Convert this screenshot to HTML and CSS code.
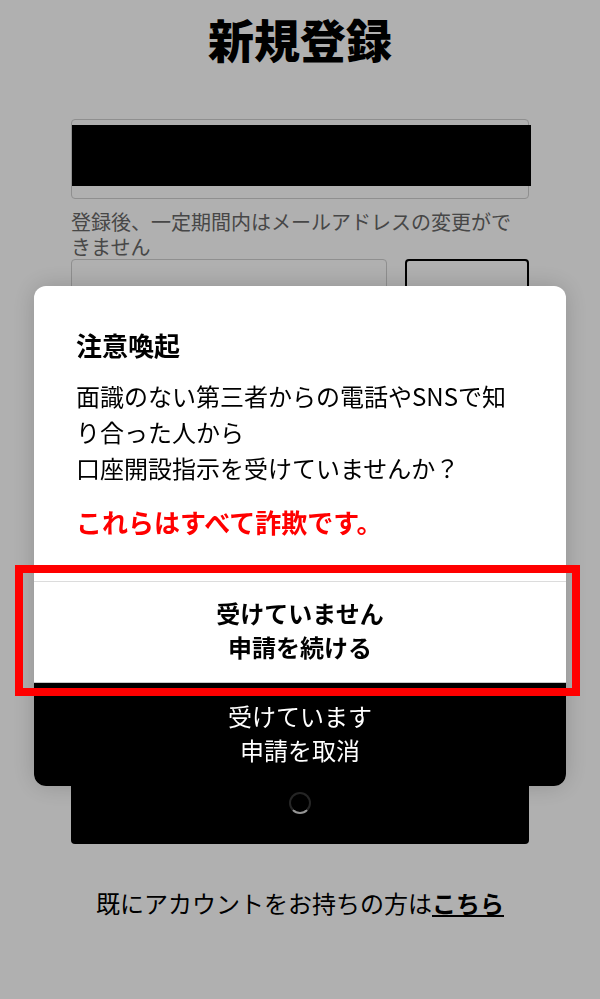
FILE: index.html
```html
<!DOCTYPE html>
<html lang="ja">
<head>
<meta charset="utf-8">
<title>新規登録</title>
<link rel="stylesheet" href="styles.css">
</head>
<body>
<main class="page">
  <h1 class="title">新規登録</h1>
  <div class="field">
    <div class="redact"></div>
  </div>
  <p class="help">登録後、一定期間内はメールアドレスの変更ができません</p>
  <div class="code-row">
    <div class="field small"></div>
    <div class="send-btn"></div>
  </div>
  <div class="submit">
    <span class="spinner"></span>
  </div>
  <p class="login">既にアカウントをお持ちの方は<a class="login-link" href="#">こちら</a></p>
</main>

<div class="overlay"></div>

<div class="modal">
  <div class="modal-body">
    <h2 class="modal-title">注意喚起</h2>
    <p class="modal-text">面識のない第三者からの電話やSNSで知り合った人から<br>口座開設指示を受けていませんか？</p>
    <p class="modal-warn">これらはすべて詐欺です。</p>
  </div>
  <button class="btn-continue">受けていません<br>申請を続ける</button>
  <button class="btn-cancel">受けています<br>申請を取消</button>
</div>

<div class="highlight"></div>
</body>
</html>
```

FILE: styles.css
```css
* {
  box-sizing: border-box;
}

html, body {
  margin: 0;
  padding: 0;
  background: #ffffff;
  font-family: "Noto Sans CJK JP", "Noto Sans", sans-serif;
  color: #000;
}

.page {
  width: 458px;
  margin: 0 auto;
  display: flex;
  flex-direction: column;
}

.title {
  margin: 11px 0 0;
  font-size: 46px;
  line-height: 1.2;
  font-weight: 900;
  text-align: center;
}

.field {
  margin-top: 53px;
  height: 80px;
  border: 1px solid #cfcfcf;
  border-radius: 4px;
  padding-top: 5px;
}

.redact {
  height: 61px;
  background: #000;
  margin-right: -3px;
}

.help {
  margin: 10px 0 0;
  font-size: 20px;
  line-height: 25px;
  color: #676767;
}

.code-row {
  display: flex;
  gap: 18px;
}

.field.small {
  margin-top: 0;
  flex: 1;
  height: 58px;
  padding: 0;
}

.send-btn {
  width: 124px;
  height: 58px;
  border: 2px solid #000;
  border-radius: 4px;
}

.submit {
  margin-top: 445px;
  height: 82px;
  background: #000;
  border-radius: 4px;
  display: flex;
  align-items: center;
  justify-content: center;
}

.spinner {
  width: 22px;
  height: 22px;
  border-radius: 50%;
  border: 2px solid rgba(255, 255, 255, 0.22);
  border-bottom-color: rgba(255, 255, 255, 0.85);
}

.login {
  margin: 41px 0 0;
  font-size: 24px;
  line-height: 36px;
  text-align: center;
}

.login-link {
  color: #000;
  font-weight: 700;
  text-decoration: underline;
}

.overlay {
  position: fixed;
  inset: 0;
  background: rgba(0, 0, 0, 0.31);
}

.modal {
  position: fixed;
  left: 34px;
  top: 286px;
  width: 532px;
  border-radius: 12px;
  background: #fff;
  overflow: hidden;
  box-shadow: 0 0 24px rgba(0, 0, 0, 0.18);
  display: flex;
  flex-direction: column;
}

.modal-body {
  padding: 39px 42px 40px;
}

.modal-title {
  margin: 0;
  font-size: 26px;
  line-height: 39px;
  font-weight: 700;
}

.modal-text {
  margin: 14px 0 0;
  font-size: 24px;
  line-height: 36px;
}

.modal-warn {
  margin: 16px 0 0;
  font-size: 26px;
  line-height: 39px;
  font-weight: 700;
  color: #ff0000;
}

.btn-continue,
.btn-cancel {
  display: block;
  width: 100%;
  margin: 0;
  border: 0;
  font-family: inherit;
  font-size: 24px;
  line-height: 34px;
  text-align: center;
}

.btn-continue {
  background: #fff;
  color: #000;
  font-weight: 700;
  border-top: 1px solid #dcdcdc;
  border-bottom: 1px solid #c8c8c8;
  padding: 14px 0 18px;
}

.btn-cancel {
  background: #000;
  color: #fff;
  font-weight: 400;
  padding: 16px 0 19px;
}

.highlight {
  position: fixed;
  left: 15px;
  top: 565px;
  width: 565px;
  height: 131px;
  border: 8px solid #ff0000;
  pointer-events: none;
}
```
